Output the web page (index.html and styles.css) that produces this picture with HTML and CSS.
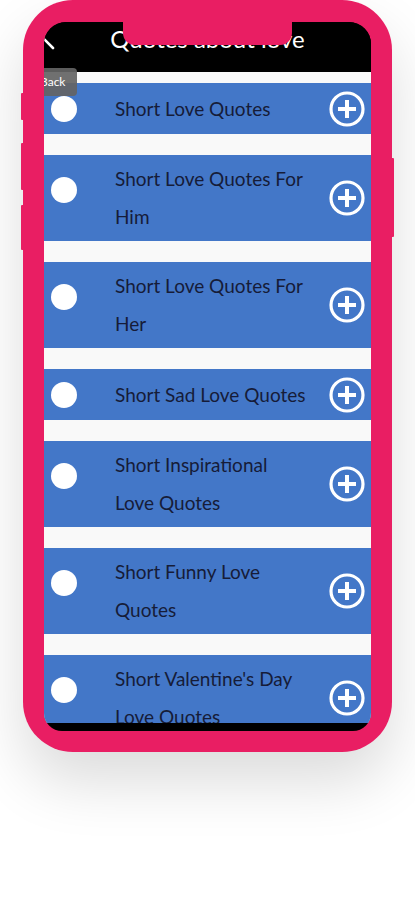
FILE: index.html
```html
<!DOCTYPE html>
<html lang="en">
<head>
    <meta charset="UTF-8">
    <meta name="viewport" content="width=device-width, initial-scale=1.0">
    <title>Quotes about love</title>
    <link rel="stylesheet" href="styles.css">
</head>
<body>
    <div class="phone">
        <span class="side-btn side-btn-mute"></span>
        <span class="side-btn side-btn-up"></span>
        <span class="side-btn side-btn-down"></span>
        <span class="side-btn side-btn-power"></span>

        <div class="screen">
            <div class="notch"></div>

            <div class="app-header">
                <svg class="back-icon" viewBox="0 0 18 32" fill="none" stroke="currentColor" stroke-width="2.6" stroke-linecap="round" stroke-linejoin="round">
                    <polyline points="16,2 2,16 16,30"></polyline>
                </svg>
                <h1>Quotes about love</h1>
            </div>

            <div class="tooltip">Back</div>

            <ul class="quote-list">
                <li class="quote-row">
                    <span class="dot"></span>
                    <span class="label">Short Love Quotes</span>
                    <svg class="add-icon" viewBox="0 0 36 36" fill="none" stroke="currentColor">
                        <circle cx="18" cy="18" r="16" stroke-width="3.2"></circle>
                        <line x1="18" y1="9" x2="18" y2="27" stroke-width="4"></line>
                        <line x1="9" y1="18" x2="27" y2="18" stroke-width="4"></line>
                    </svg>
                </li>
                <li class="quote-row tall">
                    <span class="dot"></span>
                    <span class="label">Short Love Quotes For Him</span>
                    <svg class="add-icon" viewBox="0 0 36 36" fill="none" stroke="currentColor">
                        <circle cx="18" cy="18" r="16" stroke-width="3.2"></circle>
                        <line x1="18" y1="9" x2="18" y2="27" stroke-width="4"></line>
                        <line x1="9" y1="18" x2="27" y2="18" stroke-width="4"></line>
                    </svg>
                </li>
                <li class="quote-row tall">
                    <span class="dot"></span>
                    <span class="label">Short Love Quotes For Her</span>
                    <svg class="add-icon" viewBox="0 0 36 36" fill="none" stroke="currentColor">
                        <circle cx="18" cy="18" r="16" stroke-width="3.2"></circle>
                        <line x1="18" y1="9" x2="18" y2="27" stroke-width="4"></line>
                        <line x1="9" y1="18" x2="27" y2="18" stroke-width="4"></line>
                    </svg>
                </li>
                <li class="quote-row">
                    <span class="dot"></span>
                    <span class="label">Short Sad Love Quotes</span>
                    <svg class="add-icon" viewBox="0 0 36 36" fill="none" stroke="currentColor">
                        <circle cx="18" cy="18" r="16" stroke-width="3.2"></circle>
                        <line x1="18" y1="9" x2="18" y2="27" stroke-width="4"></line>
                        <line x1="9" y1="18" x2="27" y2="18" stroke-width="4"></line>
                    </svg>
                </li>
                <li class="quote-row tall">
                    <span class="dot"></span>
                    <span class="label">Short Inspirational Love Quotes</span>
                    <svg class="add-icon" viewBox="0 0 36 36" fill="none" stroke="currentColor">
                        <circle cx="18" cy="18" r="16" stroke-width="3.2"></circle>
                        <line x1="18" y1="9" x2="18" y2="27" stroke-width="4"></line>
                        <line x1="9" y1="18" x2="27" y2="18" stroke-width="4"></line>
                    </svg>
                </li>
                <li class="quote-row tall">
                    <span class="dot"></span>
                    <span class="label">Short Funny Love Quotes</span>
                    <svg class="add-icon" viewBox="0 0 36 36" fill="none" stroke="currentColor">
                        <circle cx="18" cy="18" r="16" stroke-width="3.2"></circle>
                        <line x1="18" y1="9" x2="18" y2="27" stroke-width="4"></line>
                        <line x1="9" y1="18" x2="27" y2="18" stroke-width="4"></line>
                    </svg>
                </li>
                <li class="quote-row tall">
                    <span class="dot"></span>
                    <span class="label">Short Valentine's Day Love Quotes</span>
                    <svg class="add-icon" viewBox="0 0 36 36" fill="none" stroke="currentColor">
                        <circle cx="18" cy="18" r="16" stroke-width="3.2"></circle>
                        <line x1="18" y1="9" x2="18" y2="27" stroke-width="4"></line>
                        <line x1="9" y1="18" x2="27" y2="18" stroke-width="4"></line>
                    </svg>
                </li>
            </ul>
        </div>
    </div>
</body>
</html>
```

FILE: styles.css
```css
* {
    margin: 0;
    padding: 0;
    box-sizing: border-box;
}

body {
    font-family: Lato, 'Open Sans', sans-serif;
    background: #fff;
    height: 900px;
    overflow: hidden;
}

/* Phone frame */
.phone {
    position: relative;
    width: 369px;
    height: 752px;
    margin: 0 auto;
    padding: 22px 21px 21px;
    background: #e91e63;
    border-radius: 50px;
    box-shadow: 0 30px 60px rgba(0, 0, 0, 0.14);
}

.side-btn {
    position: absolute;
    width: 4px;
    background: #e91e63;
    border-radius: 1px;
}

.side-btn-mute { left: -2px; top: 93px; height: 27px; }
.side-btn-up { left: -2px; top: 143px; height: 47px; }
.side-btn-down { left: -2px; top: 205px; height: 45px; }
.side-btn-power { right: -2px; top: 158px; height: 79px; }

.screen {
    position: relative;
    height: 100%;
    display: flex;
    flex-direction: column;
    background: #000;
    border-radius: 22px 22px 18px 18px;
    overflow: hidden;
}

.notch {
    position: absolute;
    top: 0;
    left: 79px;
    width: 169px;
    height: 23px;
    background: #e91e63;
    border-radius: 0 0 12px 12px;
    z-index: 2;
}

/* Header */
.app-header {
    display: grid;
    grid-template-columns: 40px 1fr 40px;
    align-items: start;
    height: 50px;
    background: #000;
    color: #fff;
}

.back-icon {
    width: 18px;
    height: 32px;
    margin: -4px 0 0 -7px;
}

h1 {
    grid-column: 2;
    padding-top: 1px;
    font-size: 24px;
    font-weight: 400;
    line-height: 32px;
    text-align: center;
    white-space: nowrap;
}

.tooltip {
    position: absolute;
    top: 46px;
    left: -9px;
    width: 42px;
    height: 28px;
    padding-left: 5px;
    background: rgba(100, 100, 100, 0.92);
    border-radius: 4px;
    color: #fff;
    font-size: 12px;
    line-height: 28px;
    z-index: 3;
}

/* List */
.quote-list {
    list-style: none;
    flex: 1;
    display: flex;
    flex-direction: column;
    gap: 21px;
    padding-top: 11px;
    margin-bottom: 8px;
    background: #f9f9f9;
    overflow: hidden;
}

.quote-row {
    display: flex;
    align-items: center;
    flex-shrink: 0;
    min-height: 51px;
    padding: 5px 6px 5px 7px;
    background: #4377c8;
}

.dot {
    width: 26px;
    height: 26px;
    margin-right: 38px;
    flex-shrink: 0;
    border-radius: 50%;
    background: #fff;
}

.quote-row.tall .dot {
    margin-bottom: 16px;
}

.label {
    flex: 1;
    font-size: 19px;
    line-height: 38px;
    color: #161c38;
}

.add-icon {
    width: 36px;
    height: 36px;
    margin-left: 21px;
    flex-shrink: 0;
    color: #fff;
}
```
